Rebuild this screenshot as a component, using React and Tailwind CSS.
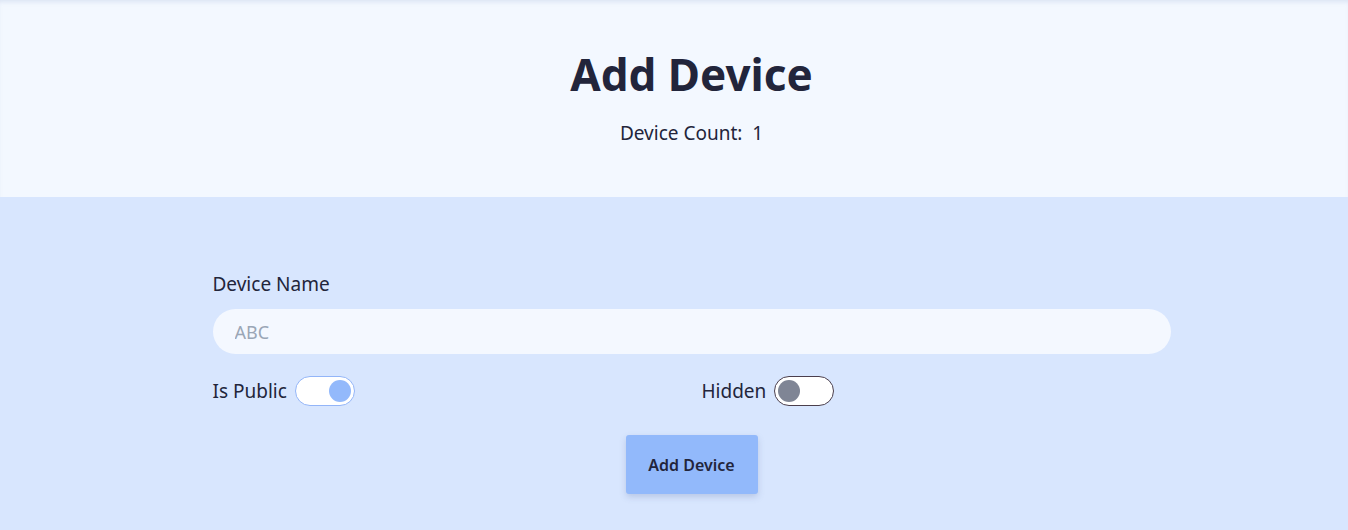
export default function App() {
  return (
    <div className="min-h-[530px] bg-[#d8e6fe] text-[#22253b] pl-[35px]" style={{ fontFamily: '"Noto Sans", "Open Sans", sans-serif' }}>
      <header className="bg-[#f3f8ff] h-[197px] -ml-[35px] pl-[35px] flex flex-col items-center shadow-[inset_0_4px_4px_-2px_rgba(150,170,210,0.25)]">
        <h1 className="text-[44px] font-bold mt-[44px] leading-[60px]">Add Device</h1>
        <p className="text-[19px] mt-[15px]">Device Count:&nbsp; 1</p>
      </header>
      <form className="w-[958px] mx-auto pt-[74px]">
        <label className="block text-[19px] leading-[26px] mb-[12px]">Device Name</label>
        <input
          placeholder="ABC"
          className="w-full h-[45px] rounded-full bg-[#f4f8ff] px-[22px] text-[18px] placeholder-[#9aa6b6] outline-none"
        />
        <div className="grid grid-cols-2 gap-5 mt-[22px]">
          <div className="flex items-center gap-2">
            <span className="text-[19px]">Is Public</span>
            <span className="w-[60px] h-[30px] rounded-full bg-white border border-[#93b5f8] flex items-center justify-end px-[3px]">
              <span className="w-[22px] h-[22px] rounded-full bg-[#93b9fb]" />
            </span>
          </div>
          <div className="flex items-center gap-2">
            <span className="text-[19px]">Hidden</span>
            <span className="w-[60px] h-[30px] rounded-full bg-white border border-[#4b3f4d] flex items-center px-[3px]">
              <span className="w-[22px] h-[22px] rounded-full bg-[#7f8595]" />
            </span>
          </div>
        </div>
        <div className="flex justify-center mt-[29px]">
          <button type="button" className="w-[132px] h-[59px] rounded-[3px] bg-[#92b9fb] text-[16px] font-semibold shadow-[0_3px_6px_rgba(90,110,160,0.25)]">
            Add Device
          </button>
        </div>
      </form>
    </div>
  );
}
